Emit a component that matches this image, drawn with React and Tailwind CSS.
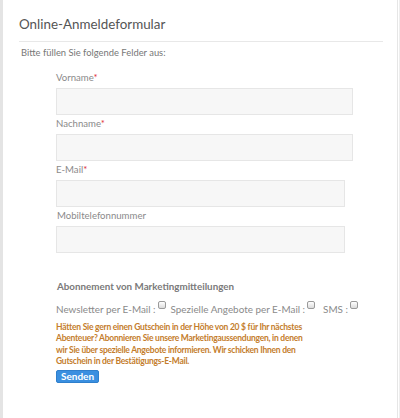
import React from 'react';

const Field = ({ label, required, width, labelClass = '' }) => (
  <div>
    <label className={`block h-[14px] text-[9.6px] leading-[14px] text-[#8a8a8a] ${labelClass}`}>
      {label}
      {required && <span className="text-[#e0303a]">*</span>}
    </label>
    <input
      type="text"
      className={`mt-[3px] block h-[27px] border border-[#e6e6e6] bg-[#f7f7f7] ${width}`}
    />
  </div>
);

const Check = () => (
  <span className="relative -top-[4px] ml-[2px] inline-block h-[8px] w-[8px] rounded-[2px] border border-[#9a9a9a] bg-gradient-to-b from-white to-[#dcdcdc] align-middle" />
);

const App = () => {
  return (
    <div className="flex h-[418px] w-[400px] bg-white font-['Lato',sans-serif]">
      {/* left strip */}
      <div className="w-[3px] bg-[#e4e4e4]" />

      <div className="flex-1 pl-[16px] pr-[11px]">
        {/* Header */}
        <h1 className="mt-[14px] h-[20px] text-[13.4px] leading-[20px] text-[#555]">
          Online-Anmeldeformular
        </h1>
        <div className="mt-[7px] mr-[3px] h-px bg-[#e8e8e8]" />
        <p className="mt-[4px] ml-[2px] text-[9.4px] leading-[14px] text-[#777]">
          Bitte füllen Sie folgende Felder aus:
        </p>

        {/* Fields */}
        <div className="ml-[37px] mt-[11px] space-y-[2px]">
          <Field label="Vorname" required width="w-[297px]" />
          <Field label="Nachname" required width="w-[297px]" />
          <Field label="E-Mail" required width="w-[289px]" />
          <Field label="Mobiltelefonnummer" width="w-[289px]" labelClass="ml-[1px]" />
        </div>

        {/* Marketing */}
        <div className="ml-[37px] mt-[26px]">
          <h2 className="ml-[1px] text-[9.8px] font-bold leading-[14px] text-[#7a7a7a]">
            Abonnement von Marketingmitteilungen
          </h2>
          <div className="mt-[9px] flex items-center whitespace-nowrap text-[9.9px] leading-[14px] text-[#8a8a8a]">
            <span>Newsletter per E-Mail :</span>
            <Check />
            <span className="ml-[5px]">Spezielle Angebote per E-Mail :</span>
            <Check />
            <span className="ml-[8px]">SMS :</span>
            <Check />
          </div>
          <p className="mt-[6px] whitespace-nowrap text-[8.5px] font-bold leading-[11.3px] tracking-[-0.25px] text-[#c47d2c]">
            Hätten Sie gern einen Gutschein in der Höhe von 20 $ für Ihr nächstes
            <br />
            Abenteuer? Abonnieren Sie unsere Marketingaussendungen, in denen
            <br />
            wir Sie über spezielle Angebote informieren. Wir schicken Ihnen den
            <br />
            Gutschein in der Bestätigungs-E-Mail.
          </p>
          <button className="mt-[3px] block h-[13px] w-[43px] rounded-[2px] border border-[#2f7fcc] bg-[#3a8fe0] text-[10px] font-bold leading-[11px] text-white">
            Senden
          </button>
        </div>
      </div>

      {/* right border */}
      <div className="flex">
        <div className="w-px bg-[#e6e6e6]" />
        <div className="w-px bg-white" />
        <div className="w-px bg-[#eeeeee]" />
      </div>
    </div>
  );
};

export default App;
